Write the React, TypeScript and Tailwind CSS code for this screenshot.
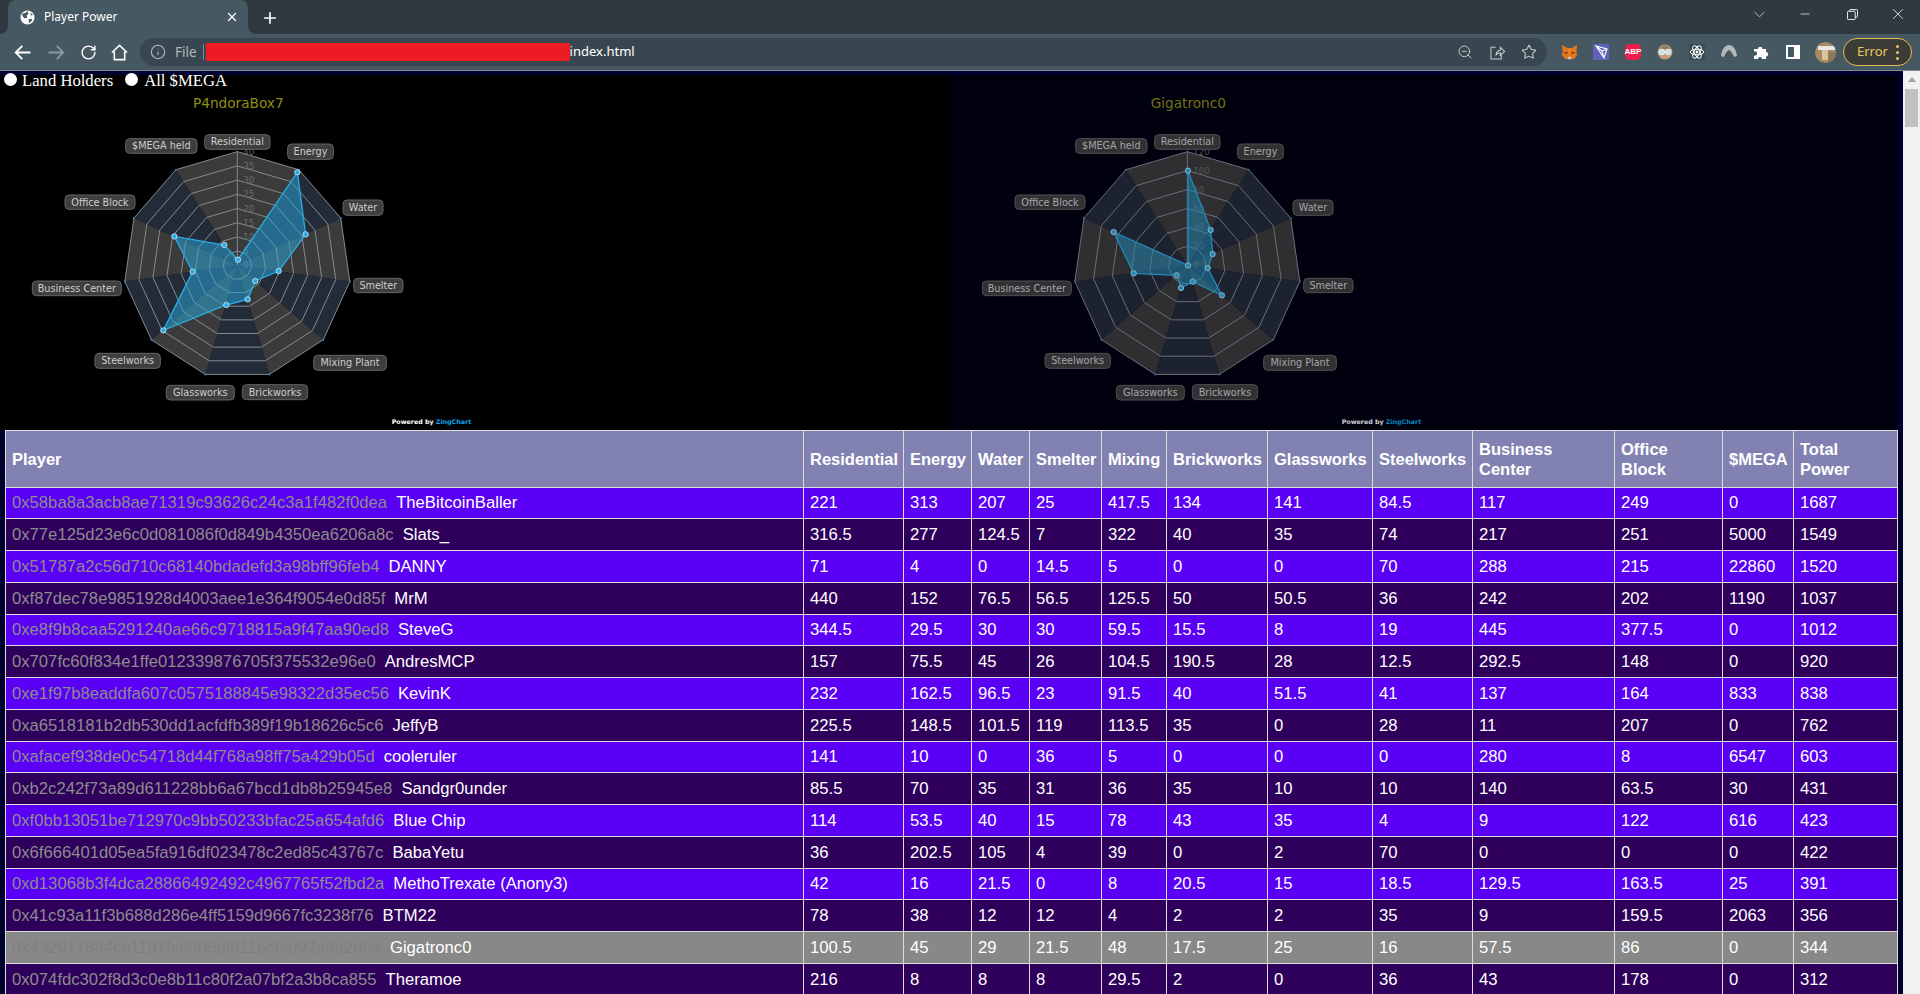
import React from "react";
import { Info, RotateCw, Star, X, Plus, ChevronDown, Minus, ZoomOut } from "lucide-react";

const sans = "font-['Liberation_Sans',Arial,sans-serif]";
const chromeFont = "font-['Noto_Sans','Open_Sans',sans-serif]";
const chartFont = "'DejaVu Sans', sans-serif";

type Row = { address: string; name: string; values: string[]; highlight?: boolean };

const raw = `0x58ba8a3acb8ae71319c93626c24c3a1f482f0dea|TheBitcoinBaller|221 313 207 25 417.5 134 141 84.5 117 249 0 1687
0x77e125d23e6c0d081086f0d849b4350ea6206a8c|Slats_|316.5 277 124.5 7 322 40 35 74 217 251 5000 1549
0x51787a2c56d710c68140bdadefd3a98bff96feb4|DANNY|71 4 0 14.5 5 0 0 70 288 215 22860 1520
0xf87dec78e9851928d4003aee1e364f9054e0d85f|MrM|440 152 76.5 56.5 125.5 50 50.5 36 242 202 1190 1037
0xe8f9b8caa5291240ae66c9718815a9f47aa90ed8|SteveG|344.5 29.5 30 30 59.5 15.5 8 19 445 377.5 0 1012
0x707fc60f834e1ffe012339876705f375532e96e0|AndresMCP|157 75.5 45 26 104.5 190.5 28 12.5 292.5 148 0 920
0xe1f97b8eaddfa607c0575188845e98322d35ec56|KevinK|232 162.5 96.5 23 91.5 40 51.5 41 137 164 833 838
0xa6518181b2db530dd1acfdfb389f19b18626c5c6|JeffyB|225.5 148.5 101.5 119 113.5 35 0 28 11 207 0 762
0xafacef938de0c54718d44f768a98ff75a429b05d|cooleruler|141 10 0 36 5 0 0 0 280 8 6547 603
0xb2c242f73a89d611228bb6a67bcd1db8b25945e8|Sandgr0under|85.5 70 35 31 36 35 10 10 140 63.5 30 431
0xf0bb13051be712970c9bb50233bfac25a654afd6|Blue Chip|114 53.5 40 15 78 43 35 4 9 122 616 423
0x6f666401d05ea5fa916df023478c2ed85c43767c|BabaYetu|36 202.5 105 4 39 0 2 70 0 0 0 422
0xd13068b3f4dca28866492492c4967765f52fbd2a|MethoTrexate (Anony3)|42 16 21.5 0 8 20.5 15 18.5 129.5 163.5 25 391
0x41c93a11f3b688d286e4ff5159d9667fc3238f76|BTM22|78 38 12 12 4 2 2 35 9 159.5 2063 356
0x432917834ce1197fc6606bf011bc6af92a9d2d8e|Gigatronc0|100.5 45 29 21.5 48 17.5 25 16 57.5 86 0 344
0x074fdc302f8d3c0e8b11c80f2a07bf2a3b8ca855|Theramoe|216 8 8 8 29.5 2 0 36 43 178 0 312`;

const rows: Row[] = raw.split("\n").map((line) => {
  const [address, name, nums] = line.split("|");
  return { address, name, values: nums.split(" "), highlight: name === "Gigatronc0" };
});

const columns = [
  { label: "Player", cls: "w-[798px]" },
  { label: "Residential", cls: "w-[100px]" },
  { label: "Energy", cls: "w-[68px]" },
  { label: "Water", cls: "w-[58px]" },
  { label: "Smelter", cls: "w-[72px]" },
  { label: "Mixing", cls: "w-[65px]" },
  { label: "Brickworks", cls: "w-[101px]" },
  { label: "Glassworks", cls: "w-[105px]" },
  { label: "Steelworks", cls: "w-[100px]" },
  { label: "Business Center", cls: "w-[142px]" },
  { label: "Office Block", cls: "w-[108px]" },
  { label: "$MEGA", cls: "w-[71px]" },
  { label: "Total Power", cls: "w-[104px]" },
];

// chart coordinates are 3x screen pixels, measured from the chart's own corner
const CX = 652;
const CY = 463;
const R = 341;

const labels = [
  { text: "Residential", x: 554, y: 71, w: 196, h: 44 },
  { text: "Energy", x: 803, y: 99, w: 137, h: 46 },
  { text: "Water", x: 969, y: 267, w: 120, h: 46 },
  { text: "Smelter", x: 1001, y: 502, w: 148, h: 43 },
  { text: "Mixing Plant", x: 881, y: 733, w: 218, h: 45 },
  { text: "Brickworks", x: 667, y: 821, w: 196, h: 45 },
  { text: "Glassworks", x: 439, y: 823, w: 204, h: 44 },
  { text: "Steelworks", x: 225, y: 727, w: 196, h: 45 },
  { text: "Business Center", x: 37, y: 510, w: 267, h: 44 },
  { text: "Office Block", x: 135, y: 252, w: 210, h: 43 },
  { text: "$MEGA held", x: 317, y: 83, w: 214, h: 44 },
];

const vertex = (i: number, r: number) => {
  const a = (i * 2 * Math.PI) / 11;
  return [CX + r * Math.sin(a), CY - r * Math.cos(a)];
};

const ringPoints = (r: number) =>
  Array.from({ length: 11 }, (_, i) => vertex(i, r).join(",")).join(" ");

const Radar = ({
  title,
  steps,
  points,
  dim,
}: {
  title: string;
  steps: number[];
  points: number[][];
  dim?: boolean;
}) => {
  const n = steps.length - 1;
  return (
    <svg
      viewBox="-60 -108 2850 1065"
      className={dim ? "w-[950px] h-[355px] opacity-80" : "w-[950px] h-[355px]"}
    >
      <text x={CX + 3} y={-8} textAnchor="middle" fontFamily={chartFont} fontSize={41} fill="#8f8f10">
        {title}
      </text>
      {Array.from({ length: 11 }, (_, i) => {
        const [x1, y1] = vertex(i, R);
        const [x2, y2] = vertex((i + 1) % 11, R);
        return (
          <polygon
            key={i}
            points={`${CX},${CY} ${x1},${y1} ${x2},${y2}`}
            fill={i % 2 === 0 ? "#3b3b3b" : "#232b38"}
          />
        );
      })}
      {steps.slice(1).map((_, i) => (
        <polygon
          key={i}
          points={ringPoints((R * (i + 1)) / n)}
          fill="none"
          stroke="#858a8e"
          strokeWidth={3}
        />
      ))}
      <line x1={CX} y1={CY} x2={CX} y2={CY - R} stroke="#858a8e" strokeWidth={3} />
      {Array.from({ length: 11 }, (_, i) => {
        const [x, y] = vertex(i, R);
        return <circle key={i} cx={x} cy={y} r={3} fill="#3f87ad" />;
      })}
      {steps.map((s, i) => (
        <text
          key={s}
          x={CX + 18}
          y={CY - (R * i) / n + 9}
          fontFamily={chartFont}
          fontSize={26}
          fill="#6b6b6b"
        >
          {s}
        </text>
      ))}
      <polygon
        points={points.map((p) => p.join(",")).join(" ")}
        fill="#29abe2"
        fillOpacity={0.5}
        stroke="#29abe2"
        strokeWidth={4}
      />
      {points.map(([x, y], i) => (
        <circle key={i} cx={x} cy={y} r={8} fill="#29abe2" stroke="#cfe9f3" strokeWidth={2.5} />
      ))}
      {labels.map((l) => (
        <g key={l.text}>
          <rect
            x={l.x}
            y={l.y}
            width={l.w}
            height={l.h}
            rx={12}
            fill="#3e3e3e"
            stroke="#646464"
            strokeWidth={3}
          />
          <text
            x={l.x + l.w / 2}
            y={l.y + l.h / 2 + 10}
            textAnchor="middle"
            fontFamily={chartFont}
            fontSize={29}
            fill="#cdcdcd"
          >
            {l.text}
          </text>
        </g>
      ))}
      <text x={1115} y={938} fontFamily={chartFont} fontSize={19} fontWeight={700} fill="#ffffff">
        Powered by <tspan fill="#0ea5e9">ZingChart</tspan>
      </text>
    </svg>
  );
};

const p4ndora = [
  [654, 446], [832, 184], [857, 370], [776, 480], [706, 510], [683, 565],
  [619, 582], [430, 658], [518, 482], [463, 376], [613, 402],
];
const gigatron = [
  [654, 179], [722, 357], [728, 429], [713, 471], [756, 553], [668, 512],
  [633, 531], [620, 493], [491, 487], [431, 363], [654, 463],
];

const Fox = () => (
  <svg viewBox="0 0 20 20" className="w-[17px] h-[17px]">
    <polygon points="1,1 8,5 12,5 19,1 18,9 19,13 15,18 12,17 8,17 5,18 1,13 2,9" fill="#e2761b" />
    <polygon points="8,5 12,5 11,11 9,11" fill="#f6851b" />
    <polygon points="3,10 8,9 7,12" fill="#763d16" />
    <polygon points="17,10 12,9 13,12" fill="#763d16" />
    <polygon points="8,15 12,15 12,18 8,18" fill="#d7c1b3" />
  </svg>
);

const Prism = () => (
  <svg viewBox="0 0 16 16" className="w-[16px] h-[16px]">
    <rect width="16" height="16" fill="#5f62b8" />
    <path d="M3 2 L14 5 L11 14 Z M3 2 L9 7 L11 14 M9 7 L14 5" fill="none" stroke="#fff" strokeWidth="1.1" />
  </svg>
);

const Abp = () => (
  <div className={`w-[16px] h-[16px] rounded-[5px] bg-[#ee1f4c] flex items-center justify-center text-white text-[8px] font-bold ${sans}`}>
    ABP
  </div>
);

const Glasses = () => (
  <svg viewBox="0 0 16 16" className="w-[16px] h-[16px]">
    <circle cx="8" cy="8" r="7.5" fill="#c69a7a" />
    <path d="M2 5 A7 7 0 0 1 14 5 Z" fill="#8d8063" />
    <circle cx="4.8" cy="8" r="2.8" fill="#bfe6ea" stroke="#e8f4f4" />
    <circle cx="11.2" cy="8" r="2.8" fill="#bfe6ea" stroke="#e8f4f4" />
  </svg>
);

const AtomIcon = () => (
  <svg viewBox="0 0 16 16" className="w-[16px] h-[16px]">
    <rect width="16" height="16" fill="#3a4a52" />
    <g fill="none" stroke="#fff" strokeWidth="1">
      <ellipse cx="8" cy="8" rx="6.8" ry="2.8" />
      <ellipse cx="8" cy="8" rx="6.8" ry="2.8" transform="rotate(60 8 8)" />
      <ellipse cx="8" cy="8" rx="6.8" ry="2.8" transform="rotate(120 8 8)" />
    </g>
    <circle cx="8" cy="8" r="1.4" fill="#fff" />
  </svg>
);

const Arch = () => (
  <svg viewBox="0 0 16 16" className="w-[16px] h-[16px]">
    <path d="M0 12 C1 5 4 1 8 1 C12 1 15 5 16 12 L13 13 C12 10 10 7 8 6 C6 7 4 10 3 13 Z" fill="#b5b9bc" />
  </svg>
);

const PuzzleIcon = () => (
  <svg viewBox="0 0 16 16" className="w-[16px] h-[16px]">
    <path
      d="M1 5 H5 A2.2 2.2 0 1 1 9.4 5 H13 V8 A2.2 2.2 0 1 1 13 12.4 V15 H9 A2 2 0 1 0 5 15 H1 V11.5 A2.2 2.2 0 1 0 1 7.5 Z"
      fill="#fff"
    />
  </svg>
);

const SidePanel = () => (
  <div className="w-[14px] h-[14px] bg-white p-[2px] pr-[6px]">
    <div className="w-full h-full bg-[#465861]" />
  </div>
);

const Avatar = () => (
  <div className="relative w-[21px] h-[21px] rounded-full overflow-hidden bg-[#a68b66]">
    <div className="absolute top-[4px] left-[3px] right-0 h-[4px] bg-[#e8e8e4]" />
    <div className="absolute top-[8px] left-[7px] w-[6px] h-[10px] bg-[#d9c49c]" />
    <div className="absolute top-[10px] left-[13px] w-[8px] h-[11px] bg-[#8f7a58]" />
  </div>
);

const ToolIcon = ({ children, cls }: { children: React.ReactNode; cls: string }) => (
  <div className={`flex items-center justify-center ${cls}`}>{children}</div>
);

export default function App() {
  return (
    <div className={`w-[1920px] h-[994px] flex flex-col overflow-hidden bg-[#00002e] ${sans}`}>
      {/* tab strip */}
      <div className="h-[34px] bg-[#2e3a40] flex items-stretch shrink-0 pl-[8px]">
        <div className={`relative w-[240px] h-[34px] bg-[#465861] rounded-t-[8px] flex items-center pl-[12px] pr-[9px] text-[12px] text-white ${chromeFont}`}>
          <div className="absolute bottom-0 -left-[8px] w-[8px] h-[8px] bg-[#465861]">
            <div className="w-full h-full bg-[#2e3a40] rounded-br-[8px]" />
          </div>
          <div className="absolute bottom-0 -right-[8px] w-[8px] h-[8px] bg-[#465861]">
            <div className="w-full h-full bg-[#2e3a40] rounded-bl-[8px]" />
          </div>
          <svg viewBox="0 0 16 16" className="w-[15px] h-[15px] mr-[9px] shrink-0">
            <circle cx="8" cy="8" r="7.5" fill="#fff" />
            <path d="M2 4 L6 3 L8 1 L9 4 L7 6 L8 8 L5 9 L3 7 Z M9 10 L12 9 L13 11 L10 14 Z M11 3 L14 5 L12 6 Z" fill="#465861" />
          </svg>
          <span className="flex-1">Player Power</span>
          <X size={14} strokeWidth={2.2} className="text-white" />
        </div>
        <ToolIcon cls="w-[26px] ml-[9px]">
          <Plus size={18} strokeWidth={2.2} className="text-white mt-[2px]" />
        </ToolIcon>
        <div className="flex-1" />
        <ToolIcon cls="w-[46px] pb-[6px]">
          <ChevronDown size={19} strokeWidth={1} className="text-[#d5d9db]" />
        </ToolIcon>
        <ToolIcon cls="w-[46px] pb-[6px]">
          <Minus size={14} strokeWidth={1.2} className="text-white" />
        </ToolIcon>
        <ToolIcon cls="w-[48px] pb-[6px]">
          <svg viewBox="0 0 12 12" className="w-[11px] h-[11px]" fill="none" stroke="#fff" strokeWidth="1">
            <rect x="0.5" y="2.5" width="8.5" height="9" rx="1" />
            <path d="M3 2.5 V1.5 A1 1 0 0 1 4 0.5 H10.5 A1 1 0 0 1 11.5 1.5 V8 A1 1 0 0 1 10.5 9 H9" />
          </svg>
        </ToolIcon>
        <ToolIcon cls="w-[44px] pb-[6px]">
          <X size={18} strokeWidth={1} className="text-white" />
        </ToolIcon>
      </div>

      {/* toolbar */}
      <div className="h-[37px] bg-[#465861] border-b border-[#7c8a91] flex items-center shrink-0 pl-[5px] pr-[8px]">
        <ToolIcon cls="w-[34px]">
          <svg viewBox="0 0 16 16" className="w-[17px] h-[17px]" fill="none" stroke="#fff" strokeWidth="1.7">
            <path d="M15.5 8 H1.8 M7.8 1.8 L1.6 8 L7.8 14.2" />
          </svg>
        </ToolIcon>
        <ToolIcon cls="w-[34px]">
          <svg viewBox="0 0 16 16" className="w-[17px] h-[17px]" fill="none" stroke="#8a979d" strokeWidth="1.7">
            <path d="M0.5 8 H14.2 M8.2 1.8 L14.4 8 L8.2 14.2" />
          </svg>
        </ToolIcon>
        <ToolIcon cls="w-[30px]">
          <RotateCw size={17} strokeWidth={2} className="text-white" />
        </ToolIcon>
        <ToolIcon cls="w-[33px]">
          <svg viewBox="0 0 18 18" className="w-[17px] h-[17px]" fill="none" stroke="#fff" strokeWidth="1.7">
            <path d="M1 9 L9 1.5 L17 9 M3.5 8 V16.5 H14.5 V8" />
          </svg>
        </ToolIcon>
        <div className="ml-[4px] w-[1407px] h-[28px] rounded-full bg-[#38474f] flex items-center pl-[10px] pr-[2px]">
          <Info size={16} strokeWidth={1.6} className="text-[#b6bdc0] shrink-0" />
          <span className={`ml-[9px] text-[13.5px] text-[#b0b8bb] ${chromeFont}`}>File</span>
          <div className="ml-[6px] w-px h-[16px] bg-[#7c8a91]" />
          <div className="ml-[2px] w-[364px] h-[18px] bg-[#ed1c24]" />
          <span className={`text-[13px] text-white ${chromeFont}`}>index.html</span>
          <div className="flex-1" />
          <ToolIcon cls="w-[32px]">
            <ZoomOut size={16} strokeWidth={1.5} className="text-[#c6cbce]" />
          </ToolIcon>
          <ToolIcon cls="w-[32px]">
            <svg viewBox="0 0 16 16" className="w-[15px] h-[15px]" fill="none" stroke="#c6cbce" strokeWidth="1.1">
              <path d="M6 2.5 H1 V15 H12 V10 M6.5 10.5 C6.5 7 9 5.5 11 5.5 V2.5 L15.5 6.8 L11 11 V8.3 C9 8.3 7.5 9 6.5 10.5 Z" />
            </svg>
          </ToolIcon>
          <ToolIcon cls="w-[32px]">
            <Star size={16} strokeWidth={1.6} className="text-[#c6cbce]" />
          </ToolIcon>
        </div>
        <ToolIcon cls="w-[32px] ml-[6px]"><Fox /></ToolIcon>
        <ToolIcon cls="w-[32px]"><Prism /></ToolIcon>
        <ToolIcon cls="w-[32px]"><Abp /></ToolIcon>
        <ToolIcon cls="w-[32px]"><Glasses /></ToolIcon>
        <ToolIcon cls="w-[32px]"><AtomIcon /></ToolIcon>
        <ToolIcon cls="w-[32px]"><Arch /></ToolIcon>
        <ToolIcon cls="w-[32px]"><PuzzleIcon /></ToolIcon>
        <ToolIcon cls="w-[32px]"><SidePanel /></ToolIcon>
        <ToolIcon cls="w-[32px]"><Avatar /></ToolIcon>
        <div className={`ml-[2px] w-[69px] h-[28px] rounded-full bg-[#3b3c37] border border-[#e6bd4e] flex items-center pl-[13px] text-[13px] text-[#efc75e] ${chromeFont}`}>
          <span className="flex-1">Error</span>
          <div className="flex flex-col gap-[3px] mr-[12px]">
            <div className="w-[3px] h-[3px] rounded-full bg-[#efc75e]" />
            <div className="w-[3px] h-[3px] rounded-full bg-[#efc75e]" />
            <div className="w-[3px] h-[3px] rounded-full bg-[#efc75e]" />
          </div>
        </div>
      </div>

      {/* page + scrollbar */}
      <div className="flex-1 flex min-h-0">
        <div className="relative w-[1903px] pt-[4px] overflow-hidden">
          <div className="absolute top-[1px] left-[4px] z-10 flex items-center text-white text-[16.67px] font-['Liberation_Serif',serif] leading-[18px]">
            <input type="radio" className="appearance-none w-[13px] h-[13px] rounded-full bg-white -mt-[3px]" readOnly />
            <span className="ml-[5px]">Land Holders</span>
            <input type="radio" className="appearance-none w-[13px] h-[13px] rounded-full bg-white ml-[12px] -mt-[3px]" readOnly />
            <span className="ml-[6px]">All $MEGA</span>
          </div>

          <div className="flex h-[355px] w-[1898px]">
            <div className="w-[950px] bg-black">
              <Radar title="P4ndoraBox7" steps={[0, 5, 10, 15, 20, 25, 30, 35, 40]} points={p4ndora} />
            </div>
            <div className="w-[948px] bg-[#00000e]">
              <Radar title="Gigatronc0" steps={[0, 20, 40, 60, 80, 100, 120]} points={gigatron} dim />
            </div>
          </div>

          <table className="ml-[5px] w-[1893px] table-fixed border-collapse text-[16.67px] text-white">
            <thead>
              <tr className="h-[56.5px] bg-[#8282b2]">
                {columns.map((c) => (
                  <th key={c.label} className={`${c.cls} border border-[#ddd] px-[6px] text-left font-bold leading-[20px] text-[16.5px]`}>
                    {c.label}
                  </th>
                ))}
              </tr>
            </thead>
            <tbody>
              {rows.map((r, i) => (
                <tr
                  key={r.address}
                  className={`h-[31.75px] ${r.highlight ? "bg-[#888888]" : i % 2 === 0 ? "bg-[#5a00f5]" : "bg-[#2e005c]"}`}
                >
                  <td className="border border-[#ddd] px-[6px] whitespace-nowrap overflow-hidden">
                    <span className={r.highlight ? "text-[#808080]" : "text-[#8c8c8c]"}>{r.address}</span>
                    <span className="ml-[9px]">{r.name}</span>
                  </td>
                  {r.values.map((v, j) => (
                    <td key={j} className="border border-[#ddd] px-[6px]">
                      {v}
                    </td>
                  ))}
                </tr>
              ))}
            </tbody>
          </table>
        </div>

        <div className="w-[17px] bg-[#f1f1f1] flex flex-col items-center shrink-0">
          <div className="h-[17px] flex items-center justify-center">
            <div className="w-0 h-0 border-x-[4px] border-x-transparent border-b-[5px] border-b-[#a3a3a3]" />
          </div>
          <div className="w-[13px] h-[38px] bg-[#c1c1c1] mt-[1px]" />
        </div>
      </div>
    </div>
  );
}
